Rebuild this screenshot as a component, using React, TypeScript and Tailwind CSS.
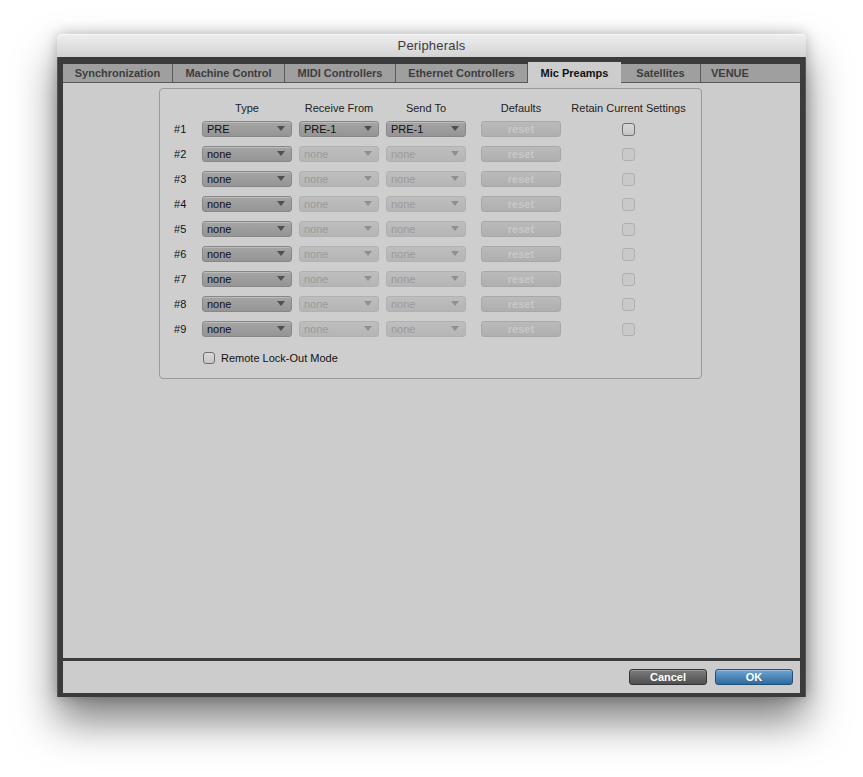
import React from 'react';

const font = { fontFamily: '"Liberation Sans", Arial, sans-serif' };

const tabs = [
  { label: 'Synchronization', w: 'w-[110px]' },
  { label: 'Machine Control', w: 'w-[112px]' },
  { label: 'MIDI Controllers', w: 'w-[111px]' },
  { label: 'Ethernet Controllers', w: 'w-[132px]' },
  { label: 'Mic Preamps', w: 'w-[93px]', active: true },
  { label: 'Satellites', w: 'w-[80px]' },
];

const Arrow: React.FC<{ disabled?: boolean }> = ({ disabled }) => (
  <svg width="8" height="5" viewBox="0 0 8 5" className="absolute right-[6px] top-[4px]">
    <path d="M0 0 L8 0 L4 5 Z" fill={disabled ? '#8f8f8f' : '#505050'} />
  </svg>
);

const Dropdown: React.FC<{ value: string; width: string; disabled?: boolean }> = ({ value, width, disabled }) => (
  <div
    className={`relative ${width} h-[16px] rounded-[3px] flex items-center pl-[4px] text-[11px] leading-none ${
      disabled
        ? 'bg-gradient-to-b from-[#bebebe] to-[#b5b5b5] border border-[#b1b1b1] text-[#9a9a9a]'
        : 'bg-gradient-to-b from-[#a5a5a5] to-[#959595] border border-[#888888] text-[#111] shadow-[inset_0_1px_0_rgba(255,255,255,0.25)]'
    }`}
  >
    {value}
    <Arrow disabled={disabled} />
  </div>
);

const ResetButton: React.FC = () => (
  <div className="w-[80px] h-[16px] rounded-[3px] bg-gradient-to-b from-[#bababa] to-[#afafaf] border border-[#a8a8a8] flex items-center justify-center text-[11px] font-bold text-[#c8c8c8] leading-none">
    reset
  </div>
);

const Checkbox: React.FC<{ enabled?: boolean; size?: string }> = ({ enabled, size = 'w-[13px] h-[13px]' }) => (
  <div
    className={`${size} rounded-[3px] border ${
      enabled ? 'border-[#6f6f6f] bg-gradient-to-b from-[#d8d8d8] to-[#c6c6c6]' : 'border-[#b0b0b0] bg-[#c9c9c9]'
    }`}
  />
);

export default function App() {
  const rows = Array.from({ length: 9 }, (_, i) => i + 1);

  return (
    <div className="w-[863px] h-[777px] bg-white pt-[34px] pl-[57px]" style={font}>
      <div className="w-[749px] flex flex-col rounded-t-[5px] shadow-[0_24px_42px_rgba(0,0,0,0.5),0_0_14px_rgba(0,0,0,0.25)]">
        {/* Title bar */}
        <div className="h-[23px] rounded-t-[5px] bg-gradient-to-b from-[#eeeeee] to-[#d3d3d3] border-t border-[#f8f8f8] flex items-center justify-center">
          <span className="text-[13px] text-[#3c3c3c] tracking-[0.2px]">Peripherals</span>
        </div>

        {/* Frame body */}
        <div className="bg-[#3b3b3b] px-[5px] pt-[5px] pb-[4px] border-l border-r border-[#555]">
          {/* Tabs */}
          <div className="h-[21px] flex items-end">
            {tabs.map((t) =>
              t.active ? (
                <div
                  key={t.label}
                  className={`${t.w} h-[21px] bg-[#cdcdcd] flex items-center justify-center text-[11px] font-bold text-[#111] pt-[1px]`}
                >
                  {t.label}
                </div>
              ) : (
                <div
                  key={t.label}
                  className={`${t.w} h-[19px] bg-[#9f9f9f] border-r border-b border-[#5a5a5a] flex items-center justify-center text-[11px] font-bold text-[#3d3d3d]`}
                >
                  {t.label}
                </div>
              )
            )}
            <div className="flex-1 h-[19px] bg-[#9f9f9f] border-b border-[#5a5a5a] flex items-center pl-[10px] text-[11px] font-bold text-[#3d3d3d]">
              VENUE
            </div>
          </div>

          {/* Content */}
          <div className="h-[575px] bg-[#cccccc] pt-[5px] flex">
            <div className="ml-[96px] w-[543px] h-[291px] border border-[#9a9a9a] rounded-[4px] bg-[#cecece] pt-[11px] pl-[14px] pr-[12px]">
              {/* Header */}
              <div className="h-[16px] flex items-center text-[11px] text-[#222]">
                <div className="w-[28px]" />
                <div className="w-[90px] text-center">Type</div>
                <div className="w-[80px] ml-[7px] text-center">Receive From</div>
                <div className="w-[80px] ml-[7px] text-center">Send To</div>
                <div className="w-[80px] ml-[15px] text-center">Defaults</div>
                <div className="w-[13px] ml-[61px] flex justify-center whitespace-nowrap">Retain Current Settings</div>
              </div>

              {/* Rows */}
              <div className="mt-[5px] flex flex-col gap-[9px]">
                {rows.map((n) => {
                  const first = n === 1;
                  return (
                    <div key={n} className="h-[16px] flex items-center">
                      <div className="w-[28px] text-[11px] text-[#111]">#{n}</div>
                      <Dropdown value={first ? 'PRE' : 'none'} width="w-[90px]" />
                      <div className="ml-[7px]">
                        <Dropdown value={first ? 'PRE-1' : 'none'} width="w-[80px]" disabled={!first} />
                      </div>
                      <div className="ml-[7px]">
                        <Dropdown value={first ? 'PRE-1' : 'none'} width="w-[80px]" disabled={!first} />
                      </div>
                      <div className="ml-[15px]">
                        <ResetButton />
                      </div>
                      <div className="ml-[61px]">
                        <Checkbox enabled={first} />
                      </div>
                    </div>
                  );
                })}
              </div>

              {/* Remote lock-out */}
              <div className="mt-[13px] h-[16px] flex items-center pl-[29px]">
                <Checkbox enabled size="w-[12px] h-[12px]" />
                <span className="ml-[6px] text-[11px] text-[#111]">Remote Lock-Out Mode</span>
              </div>
            </div>
          </div>

          {/* Separator */}
          <div className="h-[3px]" />

          {/* Footer */}
          <div className="h-[32px] bg-[#cccccc] flex justify-end items-start pt-[8px] pr-[7px] gap-[8px]">
            <div className="w-[78px] h-[16px] rounded-[3px] border border-[#333] bg-gradient-to-b from-[#7c7c7c] to-[#505050] flex items-center justify-center text-[11px] font-bold text-white leading-none shadow-[inset_0_1px_0_rgba(255,255,255,0.25)]">
              Cancel
            </div>
            <div className="w-[78px] h-[16px] rounded-[3px] border border-[#21507a] bg-gradient-to-b from-[#6ea6d4] to-[#2f6a9c] flex items-center justify-center text-[11px] font-bold text-white leading-none shadow-[inset_0_1px_0_rgba(255,255,255,0.3)]">
              OK
            </div>
          </div>
        </div>
      </div>
    </div>
  );
}
